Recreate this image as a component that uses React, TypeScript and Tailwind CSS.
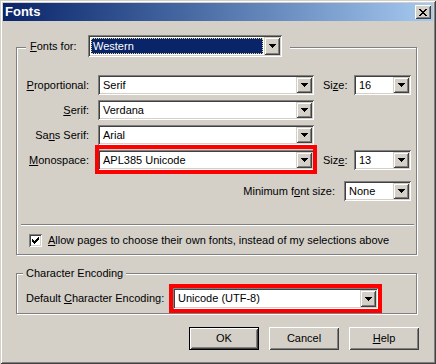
import React from 'react';

const font = "font-['Liberation_Sans',Arial,sans-serif]";

// classic 3d edges
const sunken =
  'shadow-[inset_1px_1px_0_#808080,inset_-1px_-1px_0_#ffffff,inset_2px_2px_0_#404040,inset_-2px_-2px_0_#d4d0c8]';
const raised =
  'shadow-[inset_1px_1px_0_#ffffff,inset_-1px_-1px_0_#404040,inset_2px_2px_0_#d4d0c8,inset_-2px_-2px_0_#808080]';
const comboBtn =
  'shadow-[inset_1px_1px_0_#d4d0c8,inset_-1px_-1px_0_#404040,inset_2px_2px_0_#ffffff,inset_-2px_-2px_0_#808080]';
const etched = 'border border-[#808080] shadow-[inset_1px_1px_0_#ffffff,1px_1px_0_#ffffff]';

const Arrow = () => (
  <svg width="7" height="4" viewBox="0 0 7 4" shapeRendering="crispEdges" fill="#000">
    <rect x="0" y="0" width="7" height="1" />
    <rect x="1" y="1" width="5" height="1" />
    <rect x="2" y="2" width="3" height="1" />
    <rect x="3" y="3" width="1" height="1" />
  </svg>
);

const CheckMark = () => (
  <svg width="7" height="7" viewBox="0 0 7 7" shapeRendering="crispEdges" fill="#000">
    <rect x="6" y="0" width="1" height="1" />
    <rect x="5" y="1" width="2" height="1" />
    <rect x="0" y="2" width="1" height="1" />
    <rect x="4" y="2" width="3" height="1" />
    <rect x="0" y="3" width="2" height="1" />
    <rect x="3" y="3" width="3" height="1" />
    <rect x="0" y="4" width="5" height="1" />
    <rect x="1" y="5" width="3" height="1" />
    <rect x="2" y="6" width="1" height="1" />
  </svg>
);

const CloseGlyph = () => (
  <svg width="8" height="7" viewBox="0 0 8 7" shapeRendering="crispEdges" fill="#000">
    <rect x="0" y="0" width="2" height="1" />
    <rect x="6" y="0" width="2" height="1" />
    <rect x="1" y="1" width="2" height="1" />
    <rect x="5" y="1" width="2" height="1" />
    <rect x="2" y="2" width="4" height="1" />
    <rect x="3" y="3" width="2" height="1" />
    <rect x="2" y="4" width="4" height="1" />
    <rect x="1" y="5" width="2" height="1" />
    <rect x="5" y="5" width="2" height="1" />
    <rect x="0" y="6" width="2" height="1" />
    <rect x="6" y="6" width="2" height="1" />
  </svg>
);

const Combo: React.FC<{ value: string; className: string; focused?: boolean }> = ({
  value,
  className,
  focused,
}) => (
  <div className={`flex shrink-0 bg-white p-[2px] ${sunken} ${className}`}>
    <div className="flex min-w-0 flex-1 items-stretch p-px">
      {focused ? (
        <div className="flex flex-1 items-center border border-dotted border-[#e8d890] bg-[#0a246a] pl-px text-white">
          {value}
        </div>
      ) : (
        <span className="flex items-center pl-[2px]">{value}</span>
      )}
    </div>
    <div className={`flex w-[16px] shrink-0 items-center justify-center bg-[#d4d0c8] ${comboBtn}`}>
      <Arrow />
    </div>
  </div>
);

const Button: React.FC<{ children: React.ReactNode; isDefault?: boolean }> = ({ children, isDefault }) => (
  <div
    className={`flex h-[23px] w-[70px] items-center justify-center bg-[#d4d0c8] ${raised} ${
      isDefault ? 'border border-black' : ''
    }`}
  >
    {children}
  </div>
);

export default function App() {
  return (
    <div
      className={`flex h-[364px] w-[436px] flex-col bg-[#d4d0c8] p-[3px] text-[11px] leading-[13px] text-black ${font} shadow-[inset_1px_1px_0_#d4d0c8,inset_-1px_-1px_0_#404040,inset_2px_2px_0_#ffffff,inset_-2px_-2px_0_#808080]`}
    >
      {/* Title bar */}
      <div className="flex h-[18px] items-center justify-between bg-linear-to-r from-[#0a246a] to-[#a6caf0] pl-[2px] pr-[2px]">
        <span className="text-[13px] font-bold leading-[18px] text-white">Fonts</span>
        <div className={`flex h-[14px] w-[16px] items-center justify-center bg-[#d4d0c8] ${raised}`}>
          <CloseGlyph />
        </div>
      </div>

      <div className="flex flex-col pl-[13px] pr-[16px]">
        {/* Fonts for group */}
        <div className={`relative mt-[26px] h-[208px] ${etched}`}>
          <div className="absolute left-[9px] top-[-13px] flex items-center bg-[#d4d0c8] pl-[4px] pr-[8px]">
            <span className="w-[58px]">
              <u>F</u>onts for:
            </span>
            <Combo value="Western" focused className="h-[22px] w-[194px]" />
          </div>

          <div className="flex flex-col pt-[27px]">
            <div className="flex flex-col gap-[5px]">
              <div className="flex h-[20px] items-center">
                <span className="w-[72px] text-right">
                  <u>P</u>roportional:
                </span>
                <Combo value="Serif" className="ml-[9px] h-[20px] w-[216px]" />
                <span className="ml-[9px] w-[31px]">
                  Si<u>z</u>e:
                </span>
                <Combo value="16" className="h-[20px] w-[57px]" />
              </div>
              <div className="flex h-[20px] items-center">
                <span className="w-[72px] text-right">
                  <u>S</u>erif:
                </span>
                <Combo value="Verdana" className="ml-[9px] h-[20px] w-[216px]" />
              </div>
              <div className="flex h-[20px] items-center">
                <span className="w-[72px] text-right">
                  Sa<u>n</u>s Serif:
                </span>
                <Combo value="Arial" className="ml-[9px] h-[20px] w-[216px]" />
              </div>
              <div className="flex h-[20px] items-center">
                <span className="w-[72px] text-right">
                  <u>M</u>onospace:
                </span>
                <div className="relative ml-[9px]">
                  <Combo value="APL385 Unicode" className="h-[20px] w-[216px]" />
                  <div className="pointer-events-none absolute -bottom-[4px] -left-[3px] -right-[3px] -top-[5px] border-4 border-[#ff0000]" />
                </div>
                <span className="ml-[9px] w-[31px]">
                  Siz<u>e</u>:
                </span>
                <Combo value="13" className="h-[20px] w-[57px]" />
              </div>
            </div>

            <div className="mt-[11px] flex h-[20px] items-center justify-end gap-[9px] pr-[5px]">
              <span>
                Minimum f<u>o</u>nt size:
              </span>
              <Combo value="None" className="h-[20px] w-[67px]" />
            </div>

            <div className="ml-[4px] mr-[2px] mt-[23px] h-[2px] border-b border-t border-b-white border-t-[#808080]" />

            <div className="ml-[12px] mt-[8px] flex h-[13px] items-center gap-[6px]">
              <div className={`flex h-[13px] w-[13px] items-center justify-center bg-white ${sunken}`}>
                <CheckMark />
              </div>
              <span>
                <u>A</u>llow pages to choose their own fonts, instead of my selections above
              </span>
            </div>
          </div>
        </div>

        {/* Character encoding group */}
        <div className={`relative mt-[18px] h-[41px] ${etched}`}>
          <span className="absolute left-[6px] top-[-7px] bg-[#d4d0c8] px-[3px]">Character Encoding</span>
          <div className="flex items-center pl-[9px] pt-[14px]">
            <span className="w-[147px]">
              Default <u>C</u>haracter Encoding:
            </span>
            <div className="relative">
              <Combo value="Unicode (UTF-8)" className="h-[21px] w-[205px]" />
              <div className="pointer-events-none absolute -inset-[4px] border-4 border-[#ff0000]" />
            </div>
          </div>
        </div>

        {/* Buttons */}
        <div className="-mr-[2px] mt-[13px] flex justify-end gap-[10px]">
          <Button isDefault>OK</Button>
          <Button>Cancel</Button>
          <Button>
            <u>H</u>elp
          </Button>
        </div>
      </div>
    </div>
  );
}
